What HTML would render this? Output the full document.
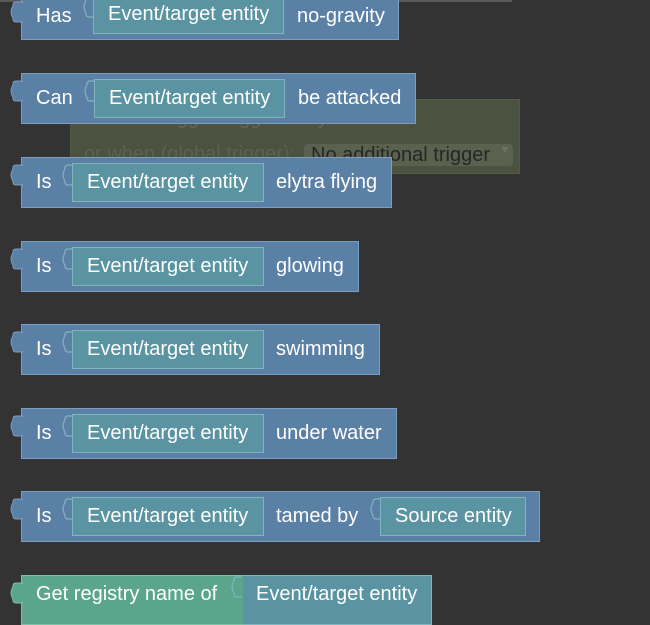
<!DOCTYPE html>
<html><head><meta charset="utf-8"><style>
*{margin:0;padding:0;box-sizing:border-box}
body{width:650px;height:612px;background:#333333;position:relative;overflow:hidden;font-family:"Liberation Sans",Arial,sans-serif;color:#fff;font-size:20px}
.topline{position:absolute;left:0;top:0;width:512px;height:2px;background:#5a5a5a}
.green{position:absolute;left:70px;top:99px;width:450px;height:75px;background:#4b5340;border:1px solid #535b46}
.g1{position:absolute;left:160px;top:107px;color:#626656;white-space:nowrap}
.g2{position:absolute;left:84px;top:143px;color:#5c6150;white-space:nowrap}
.dd{position:absolute;left:304px;top:144px;width:209px;height:22px;background:#5a614f;border-radius:4px;color:#262626;line-height:22px;padding-left:7px;white-space:nowrap}
.dd:after{content:"";position:absolute;right:4px;top:3px;border-left:4px solid transparent;border-right:4px solid transparent;border-top:6px solid #6d735f}
.b{position:absolute;left:21px;height:51px;background:#5b80a5;border:1px solid #7c9dc0}
.tab{position:absolute;left:-12px;top:7px;width:12px;height:20px;overflow:visible}
.t{position:absolute;top:0;line-height:49px;white-space:nowrap}
.in{position:absolute;top:5px;height:39px;background:#5a93a2;border:1px solid #80b5c0;line-height:37px;padding-left:14px;white-space:nowrap}
.notch{position:absolute;left:-11px;top:1px;width:11px;height:20px;overflow:visible}
</style></head><body>
<div class="topline"></div>
<div class="green"></div>
<div class="g1">trigger triggered by ... all</div>
<div class="g2">or when (global trigger):</div>
<div class="dd">No additional trigger</div>

<svg width="0" height="0" style="position:absolute">
<defs>
<symbol id="tabB" viewBox="0 0 12 20" overflow="visible"><path d="M12.5 0 L6 0 C4 0 3 1 3 3 C3 5 1 6 1 10 C1 14 3 15 3 17 C3 19 4 20 6 20 L12.5 20 Z" fill="#5b80a5" stroke="#7c9dc0" stroke-width="1"/><rect x="11" y="1" width="2" height="18" fill="#5b80a5"/></symbol>
<symbol id="tabG" viewBox="0 0 12 20" overflow="visible"><path d="M12.5 0 L6 0 C4 0 3 1 3 3 C3 5 1 6 1 10 C1 14 3 15 3 17 C3 19 4 20 6 20 L12.5 20 Z" fill="#5ba58c" stroke="#7cc0a8" stroke-width="1"/><rect x="11" y="1" width="2" height="18" fill="#5ba58c"/></symbol>
<symbol id="notch" viewBox="0 0 11 20" overflow="visible"><path d="M11 0 L6 0 C4 0 3 1 3 3 C3 5 1 6 1 10 C1 14 3 15 3 17 C3 19 4 20 6 20 L11 20" fill="none" stroke="#80b5c0" stroke-width="1.2"/></symbol>
</defs></svg>

<div class="b" style="top:-11px;width:378px">
<svg class="tab" style="top:12px"><use href="#tabB"/></svg>
<span class="t" style="left:14px;top:2px">Has</span>
<div class="in" style="left:71px;top:5px;width:191px"><svg class="notch"><use href="#notch"/></svg>Event/target entity</div>
<span class="t" style="left:275px;top:2px">no-gravity</span>
</div>
<div class="b" style="top:73px;width:395px">
<svg class="tab"><use href="#tabB"/></svg>
<span class="t" style="left:14px">Can</span>
<div class="in" style="left:72px;width:191px"><svg class="notch"><use href="#notch"/></svg>Event/target entity</div>
<span class="t" style="left:276px">be attacked</span>
</div>
<div class="b" style="top:157px;width:371px">
<svg class="tab"><use href="#tabB"/></svg>
<span class="t" style="left:14px">Is</span>
<div class="in" style="left:50px;width:192px"><svg class="notch"><use href="#notch"/></svg>Event/target entity</div>
<span class="t" style="left:254px">elytra flying</span>
</div>
<div class="b" style="top:241px;width:338px">
<svg class="tab"><use href="#tabB"/></svg>
<span class="t" style="left:14px">Is</span>
<div class="in" style="left:50px;width:192px"><svg class="notch"><use href="#notch"/></svg>Event/target entity</div>
<span class="t" style="left:254px">glowing</span>
</div>
<div class="b" style="top:324px;width:359px">
<svg class="tab"><use href="#tabB"/></svg>
<span class="t" style="left:14px">Is</span>
<div class="in" style="left:50px;width:192px"><svg class="notch"><use href="#notch"/></svg>Event/target entity</div>
<span class="t" style="left:254px">swimming</span>
</div>
<div class="b" style="top:408px;width:376px">
<svg class="tab"><use href="#tabB"/></svg>
<span class="t" style="left:14px">Is</span>
<div class="in" style="left:50px;width:192px"><svg class="notch"><use href="#notch"/></svg>Event/target entity</div>
<span class="t" style="left:254px">under water</span>
</div>
<div class="b" style="top:491px;width:519px">
<svg class="tab"><use href="#tabB"/></svg>
<span class="t" style="left:14px">Is</span>
<div class="in" style="left:50px;width:192px"><svg class="notch"><use href="#notch"/></svg>Event/target entity</div>
<span class="t" style="left:254px">tamed by</span>
<div class="in" style="left:358px;width:146px"><svg class="notch"><use href="#notch"/></svg>Source entity</div>
</div>
<div class="b" style="top:575px;width:223px;height:50px;background:#5ba58c;border-color:#7cc0a8;border-right:none">
<svg class="tab"><use href="#tabG"/></svg>
<span class="t" style="left:14px;line-height:36px">Get registry name of</span>
</div>
<div style="position:absolute;left:243px;top:575px;width:189px;height:50px;background:#5a93a2;border:1px solid #80b5c0;border-left:none">
<svg style="position:absolute;left:-12px;top:1px;width:11px;height:20px;overflow:visible"><use href="#notch"/></svg>
<span style="position:absolute;left:13px;top:0;line-height:36px;white-space:nowrap">Event/target entity</span>
</div>
</body></html>
